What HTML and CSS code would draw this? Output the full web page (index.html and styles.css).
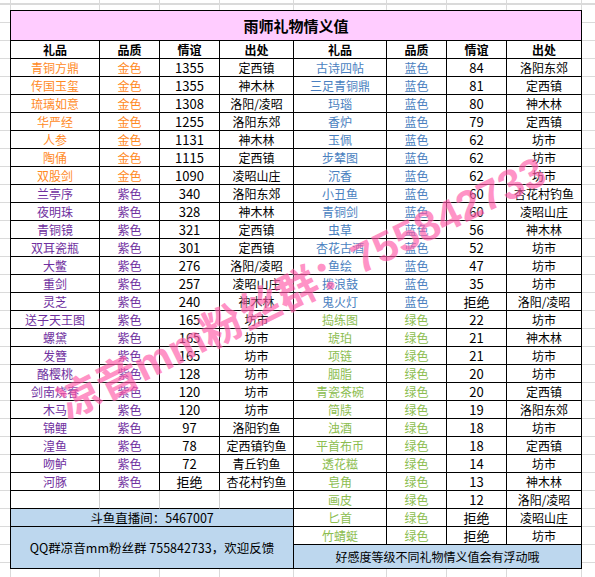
FILE: index.html
```html
<!DOCTYPE html>
<html lang="zh-CN">
<head>
    <meta charset="UTF-8">
    <meta name="viewport" content="width=device-width, initial-scale=1.0">
    <title>雨师礼物情义值</title>
    <link rel="stylesheet" href="styles.css">
    <script>
        const leftRows = [
            ['青铜方鼎', 'gold', '1355', '定西镇'],
            ['传国玉玺', 'gold', '1355', '神木林'],
            ['琉璃如意', 'gold', '1308', '洛阳/凌昭'],
            ['华严经', 'gold', '1255', '洛阳东郊'],
            ['人参', 'gold', '1131', '神木林'],
            ['陶俑', 'gold', '1115', '定西镇'],
            ['双股剑', 'gold', '1090', '凌昭山庄'],
            ['兰亭序', 'purple', '340', '洛阳东郊'],
            ['夜明珠', 'purple', '328', '神木林'],
            ['青铜镜', 'purple', '321', '定西镇'],
            ['双耳瓷瓶', 'purple', '301', '定西镇'],
            ['大鳖', 'purple', '276', '洛阳/凌昭'],
            ['重剑', 'purple', '257', '凌昭山庄'],
            ['灵芝', 'purple', '240', '神木林'],
            ['送子天王图', 'purple', '165', '坊市'],
            ['螺黛', 'purple', '165', '坊市'],
            ['发簪', 'purple', '165', '坊市'],
            ['酪樱桃', 'purple', '128', '坊市'],
            ['剑南烧春', 'purple', '120', '坊市'],
            ['木马', 'purple', '120', '坊市'],
            ['锦鲤', 'purple', '97', '洛阳钓鱼'],
            ['湟鱼', 'purple', '78', '定西镇钓鱼'],
            ['吻鲈', 'purple', '72', '青丘钓鱼'],
            ['河豚', 'purple', '拒绝', '杏花村钓鱼']
        ];
        const rightRows = [
            ['古诗四帖', 'blue', '84', '洛阳东郊'],
            ['三足青铜鼎', 'blue', '81', '定西镇'],
            ['玛瑙', 'blue', '80', '神木林'],
            ['香炉', 'blue', '79', '定西镇'],
            ['玉佩', 'blue', '62', '坊市'],
            ['步辇图', 'blue', '62', '坊市'],
            ['沉香', 'blue', '62', '坊市'],
            ['小丑鱼', 'blue', '60', '杏花村钓鱼'],
            ['青铜剑', 'blue', '60', '凌昭山庄'],
            ['虫草', 'blue', '56', '神木林'],
            ['杏花古酒', 'blue', '52', '坊市'],
            ['鱼绘', 'blue', '47', '坊市'],
            ['拨浪鼓', 'blue', '35', '坊市'],
            ['鬼火灯', 'blue', '拒绝', '洛阳/凌昭'],
            ['捣练图', 'green', '22', '坊市'],
            ['琥珀', 'green', '21', '神木林'],
            ['项链', 'green', '21', '坊市'],
            ['胭脂', 'green', '20', '坊市'],
            ['青瓷茶碗', 'green', '20', '定西镇'],
            ['简牍', 'green', '19', '洛阳东郊'],
            ['浊酒', 'green', '18', '坊市'],
            ['平首布币', 'green', '18', '定西镇'],
            ['透花糍', 'green', '14', '坊市'],
            ['皂角', 'green', '13', '神木林'],
            ['画皮', 'green', '12', '洛阳/凌昭'],
            ['匕首', 'green', '拒绝', '凌昭山庄'],
            ['竹蜻蜓', 'green', '拒绝', '坊市']
        ];
        const gradeName = { gold: '金色', purple: '紫色', blue: '蓝色', green: '绿色' };

        function fillRows(id, rows) {
            document.getElementById(id).innerHTML = rows.map(r =>
                `<div class="row">
                    <div class="cell c1 ${r[1]}">${r[0]}</div>
                    <div class="cell c2 ${r[1]}">${gradeName[r[1]]}</div>
                    <div class="cell c3">${r[2]}</div>
                    <div class="cell c4">${r[3]}</div>
                </div>`).join('');
        }

        document.addEventListener('DOMContentLoaded', function() {
            fillRows('leftBody', leftRows);
            fillRows('rightBody', rightRows);
        });
    </script>
</head>
<body>
    <div class="page">
        <div class="sheet">
            <div class="title">雨师礼物情义值</div>
            <div class="halves">
                <div class="half half-left">
                    <div class="row head">
                        <div class="cell c1">礼品</div>
                        <div class="cell c2">品质</div>
                        <div class="cell c3">情谊</div>
                        <div class="cell c4">出处</div>
                    </div>
                    <div id="leftBody"></div>
                    <div class="row blank">
                        <div class="cell c1"></div>
                        <div class="cell c2"></div>
                        <div class="cell c3"></div>
                        <div class="cell c4"></div>
                    </div>
                    <div class="note note-live">斗鱼直播间：5467007</div>
                    <div class="note note-qq">QQ群凉音mm粉丝群 755842733，欢迎反馈</div>
                </div>
                <div class="half half-right">
                    <div class="row head">
                        <div class="cell c1">礼品</div>
                        <div class="cell c2">品质</div>
                        <div class="cell c3">情谊</div>
                        <div class="cell c4">出处</div>
                    </div>
                    <div id="rightBody"></div>
                    <div class="note note-tip">好感度等级不同礼物情义值会有浮动哦</div>
                </div>
            </div>
        </div>
        <div class="watermark">凉音mm粉丝群：755842733</div>
    </div>
</body>
</html>
```

FILE: styles.css
```css
body {
    margin: 0;
    font-family: "Noto Sans CJK SC", sans-serif;
    color: #000;
    background: #fff;
}
.page {
    position: relative;
    width: 595px;
    height: 577px;
    box-sizing: border-box;
    padding: 10px 0 0 10px;
    overflow: hidden;
    background:
        linear-gradient(#dadada, #dadada) 10px 0 / 1px 100% no-repeat,
        linear-gradient(#dadada, #dadada) 99px 0 / 1px 100% no-repeat,
        linear-gradient(#dadada, #dadada) 159px 0 / 1px 100% no-repeat,
        linear-gradient(#dadada, #dadada) 219px 0 / 1px 100% no-repeat,
        linear-gradient(#dadada, #dadada) 293px 0 / 1px 100% no-repeat,
        linear-gradient(#dadada, #dadada) 386px 0 / 1px 100% no-repeat,
        linear-gradient(#dadada, #dadada) 446px 0 / 1px 100% no-repeat,
        linear-gradient(#dadada, #dadada) 506px 0 / 1px 100% no-repeat,
        linear-gradient(#dadada, #dadada) 581px 0 / 1px 100% no-repeat,
        repeating-linear-gradient(to bottom, #dadada 0 1px, transparent 1px 18px) 0 4px;
}
.sheet {
    width: 572px;
}
.title {
    height: 31px;
    box-sizing: border-box;
    border: 1px solid #000;
    background: #ffccff;
    display: flex;
    align-items: center;
    justify-content: center;
    font-size: 15px;
    font-weight: bold;
}
.halves {
    display: flex;
}
.half-left {
    width: 284px;
    border-left: 1px solid #000;
    box-sizing: border-box;
}
.half-right {
    width: 288px;
}
.row {
    display: flex;
    height: 18px;
}
.cell {
    box-sizing: border-box;
    height: 18px;
    border-right: 1px solid #000;
    border-bottom: 1px solid #000;
    background: #fff;
    display: flex;
    align-items: center;
    justify-content: center;
    font-size: 12px;
    white-space: nowrap;
}
.half-left .c1 { width: 89px; }
.half-right .c1 { width: 93px; }
.c2, .c3 { width: 60px; }
.c3 { font-size: 13px; }
.half-left .c4 { width: 74px; }
.half-right .c4 { width: 75px; }
.head .cell {
    font-weight: bold;
    font-size: 12px;
}
.blank .c1, .blank .c2, .blank .c3 {
    border-right-color: #d0d0d0;
}
.gold { color: #ff8a1f; }
.purple { color: #7030a0; }
.blue { color: #4a7fc0; }
.green { color: #8cbd4f; }
.note {
    box-sizing: border-box;
    background: #bdd7ee;
    border-right: 1px solid #000;
    border-bottom: 1px solid #000;
    display: flex;
    align-items: center;
    justify-content: center;
    font-size: 12.5px;
    white-space: nowrap;
}
.note-live { height: 18px; }
.note-qq { height: 42px; }
.note-tip { height: 24px; font-size: 12px; }
.watermark {
    position: absolute;
    left: 300px;
    top: 284px;
    transform: translate(-50%, -50%) rotate(-26.3deg);
    font-family: "Liberation Sans", "Noto Sans CJK SC", sans-serif;
    font-size: 42px;
    font-weight: bold;
    color: #ff5aa8;
    opacity: 0.65;
    text-shadow: 0 0 2px #fff;
    white-space: nowrap;
    pointer-events: none;
}
```
